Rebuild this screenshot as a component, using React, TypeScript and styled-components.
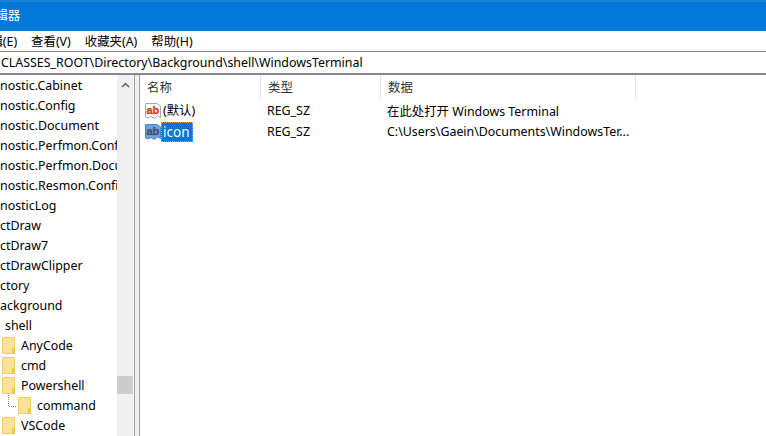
import styled, { createGlobalStyle } from 'styled-components';

const GlobalStyle = createGlobalStyle`
	html, body {
		margin: 0;
		padding: 0;
		background: #fff;
	}
	body {
		width: 766px;
		height: 436px;
		overflow: hidden;
		font-family: 'Noto Sans', 'Noto Sans CJK SC', sans-serif;
		font-size: 12.4px;
		color: #000;
	}
`;

const Window = styled.div`
	width: 766px;
	height: 436px;
	display: flex;
	flex-direction: column;
	overflow: hidden;
`;

const TitleBar = styled.div`
	height: 29px;
	flex: none;
	background: #0078d7;
	border-top: 2px solid #1a86dc;
	color: #fff;
	display: flex;
	align-items: flex-start;
	overflow: hidden;
	white-space: nowrap;
`;

const TitleText = styled.span`
	margin-left: -17px;
	margin-top: 4px;
	font-size: 12.4px;
`;

const MenuBar = styled.div`
	height: 20px;
	flex: none;
	display: flex;
	align-items: center;
	gap: 14px;
	margin-left: -22px;
	white-space: nowrap;
`;

const MenuItem = styled.span`
	font-size: 12.4px;
`;

const AddressBar = styled.div`
	height: 21px;
	flex: none;
	border-top: 1px solid #828790;
	border-bottom: 2px solid #828790;
	display: flex;
	align-items: center;
	overflow: hidden;
	white-space: nowrap;
`;

const Path = styled.span`
	margin-left: 1px;
`;

const Panes = styled.div`
	flex: 1;
	display: flex;
	min-height: 0;
`;

const TreePane = styled.div`
	width: 117px;
	flex: none;
	overflow: hidden;
`;

const TreeRow = styled.div<{ $indent: number }>`
	height: 20px;
	display: flex;
	align-items: center;
	padding-left: ${(props) => props.$indent}px;
	white-space: nowrap;
`;

const Scrollbar = styled.div`
	width: 16px;
	flex: none;
	background: #f0f0f0;
	display: flex;
	flex-direction: column;
	align-items: center;
`;

const ScrollArrow = styled.svg`
	margin-top: 7px;
	margin-bottom: 288px;
`;

const ScrollThumb = styled.div`
	width: 16px;
	height: 18px;
	background: #cdcdcd;
`;

const Splitter = styled.div`
	width: 6px;
	flex: none;
	margin-left: 1px;
	border-left: 1px solid #a0a0a0;
	border-right: 1px solid #a0a0a0;
	box-sizing: border-box;
	background: #f0f0f0;
`;

const ListPane = styled.div`
	flex: 1;
	min-width: 0;
`;

const HeaderRow = styled.div`
	height: 25px;
	display: grid;
	grid-template-columns: 121px 120px 255px;
`;

const HeaderCell = styled.div`
	border-right: 1px solid #e5e5e5;
	padding: 0 0 2px 7px;
	display: flex;
	align-items: center;
	color: #333;
`;

const ListRow = styled.div`
	height: 21px;
	display: grid;
	grid-template-columns: 121px 120px 255px;
	align-items: center;
`;

const NameCell = styled.div`
	display: flex;
	align-items: center;
	padding-left: 5px;
`;

const ValueCell = styled.div`
	padding-left: 6px;
	white-space: nowrap;
`;

const NameText = styled.span<{ $selected?: boolean }>`
	height: 20px;
	line-height: 20px;
	padding: 0 4px 0 2px;
	box-sizing: border-box;
	font-size: ${(props) => (props.$selected ? '13.5px' : 'inherit')};
	background: ${(props) => (props.$selected ? '#0078d7' : 'transparent')};
	color: ${(props) => (props.$selected ? '#fff' : '#000')};
	outline: ${(props) => (props.$selected ? '1px dotted #f0a040' : 'none')};
	outline-offset: -1px;
`;

const IconWrap = styled.svg`
	flex: none;
	display: block;
`;

const FolderWrap = styled.svg`
	flex: none;
	margin-right: 6px;
	display: block;
`;

const TreeLines = styled.svg`
	flex: none;
	display: block;
`;

function Folder() {
	return (
		<FolderWrap width="13" height="17" viewBox="0 0 13 17">
			<path d="M0.5 0.5 H12.5 V16.5 H0.5 Z" fill="#fde38f" stroke="#f0cf62" />
			<path d="M10 11.5 H13 V17 H10 Z" fill="#f5c842" />
		</FolderWrap>
	);
}

function RegIcon({ selected }: { selected?: boolean }) {
	const inkColor = selected ? '#4b4f86' : '#d4472a';
	return (
		<IconWrap width="16" height="18" viewBox="0 0 16 18">
			<path
				d="M0.5 1.5 H12 L15.5 4 V15.5 L12.5 14 L9.5 16.5 L6 14.5 L3 16 L0.5 15 Z"
				fill={selected ? '#6fa3dc' : '#fff'}
				stroke={selected ? '#4d86c8' : '#a8a8a8'}
			/>
			<text x="1.5" y="11.5" fontSize="11" fontWeight="700" fontFamily="'Liberation Sans', sans-serif" fill={inkColor} stroke={inkColor} strokeWidth="0.4">
				ab
			</text>
		</IconWrap>
	);
}

const treeItems: { label: string; indent: number; folder?: boolean; lines?: boolean }[] = [
	{ label: 'nostic.Cabinet', indent: 0 },
	{ label: 'nostic.Config', indent: 0 },
	{ label: 'nostic.Document', indent: 0 },
	{ label: 'nostic.Perfmon.Config', indent: 0 },
	{ label: 'nostic.Perfmon.Document', indent: 0 },
	{ label: 'nostic.Resmon.Config', indent: 0 },
	{ label: 'nosticLog', indent: 0 },
	{ label: 'ctDraw', indent: 0 },
	{ label: 'ctDraw7', indent: 0 },
	{ label: 'ctDrawClipper', indent: 0 },
	{ label: 'ctory', indent: 0 },
	{ label: 'ackground', indent: 0 },
	{ label: 'shell', indent: 5 },
	{ label: 'AnyCode', indent: 2, folder: true },
	{ label: 'cmd', indent: 2, folder: true },
	{ label: 'Powershell', indent: 2, folder: true },
	{ label: 'command', indent: 8, folder: true, lines: true },
	{ label: 'VSCode', indent: 2, folder: true },
];

function App() {
	return (
		<Window>
			<GlobalStyle />
			<TitleBar>
				<TitleText>编辑器</TitleText>
			</TitleBar>
			<MenuBar>
				<MenuItem>编辑(E)</MenuItem>
				<MenuItem>查看(V)</MenuItem>
				<MenuItem>收藏夹(A)</MenuItem>
				<MenuItem>帮助(H)</MenuItem>
			</MenuBar>
			<AddressBar>
				<Path>CLASSES_ROOT\Directory\Background\shell\WindowsTerminal</Path>
			</AddressBar>
			<Panes>
				<TreePane>
					{treeItems.map((item) => (
						<TreeRow key={item.label} $indent={item.indent}>
							{item.lines && (
								<TreeLines width="10" height="20" viewBox="0 0 10 20">
									<path d="M0.5 0 V11.5 H8" fill="none" stroke="#888" strokeDasharray="1 1" />
								</TreeLines>
							)}
							{item.folder && <Folder />}
							{item.label}
						</TreeRow>
					))}
				</TreePane>
				<Scrollbar>
					<ScrollArrow width="9" height="6" viewBox="0 0 9 6">
						<path d="M1 5 L4.5 1.5 L8 5" fill="none" stroke="#606060" strokeWidth="1.5" />
					</ScrollArrow>
					<ScrollThumb />
				</Scrollbar>
				<Splitter />
				<ListPane>
					<HeaderRow>
						<HeaderCell>名称</HeaderCell>
						<HeaderCell>类型</HeaderCell>
						<HeaderCell>数据</HeaderCell>
					</HeaderRow>
					<ListRow>
						<NameCell>
							<RegIcon />
							<NameText>(默认)</NameText>
						</NameCell>
						<ValueCell>REG_SZ</ValueCell>
						<ValueCell>在此处打开 Windows Terminal</ValueCell>
					</ListRow>
					<ListRow>
						<NameCell>
							<RegIcon selected />
							<NameText $selected>icon</NameText>
						</NameCell>
						<ValueCell>REG_SZ</ValueCell>
						<ValueCell>C:\Users\Gaein\Documents\WindowsTer...</ValueCell>
					</ListRow>
				</ListPane>
			</Panes>
		</Window>
	);
}

export default App;
